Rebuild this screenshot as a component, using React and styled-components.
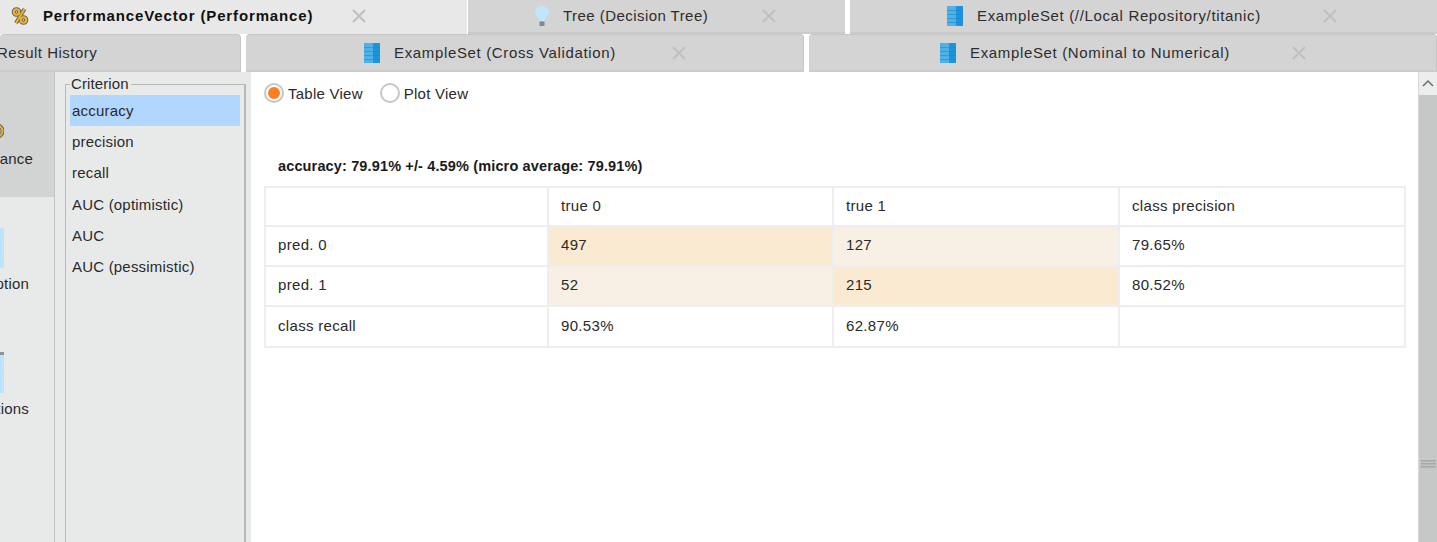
import React from 'react';
import styled, { createGlobalStyle } from 'styled-components';

const GlobalStyle = createGlobalStyle`
  html, body {
    margin: 0;
    padding: 0;
    background: #fff;
    overflow: hidden;
  }
  * {
    box-sizing: border-box;
  }
`;

const Page = styled.div`
  width: 1437px;
  height: 542px;
  display: flex;
  flex-direction: column;
  overflow: hidden;
  font-family: "Liberation Sans", Arial, sans-serif;
  font-size: 15px;
  color: #2a2a2a;
`;

const TabRow = styled.div`
  display: flex;
  height: ${(p) => p.$height}px;
  gap: ${(p) => p.$gap}px;
  flex: none;
`;

const Tab = styled.div`
  width: ${(p) => p.$width}px;
  margin-left: ${(p) => p.$offset || 0}px;
  flex: none;
  display: flex;
  align-items: center;
  overflow: hidden;
  padding-left: ${(p) => p.$pad}px;
  background: ${(p) => (p.$active ? '#e8e8e8' : '#d4d4d4')};
  border-bottom: 2px solid ${(p) => (p.$active ? '#e8e8e8' : '#cbcbcb')};
  border-radius: ${(p) => (p.$round ? '4px 4px 0 0' : '0')};
  border-top: ${(p) => (p.$round ? '1px solid #c6c6c6' : 'none')};
  border-right: ${(p) => (p.$round ? '1px solid #c6c6c6' : 'none')};
`;

const TabIcon = styled.svg`
  width: 18px;
  height: 20px;
  flex: none;
  margin-right: ${(p) => p.$gap}px;
`;

const TabLabel = styled.span`
  white-space: nowrap;
  margin-left: ${(p) => p.$shift || 0}px;
  margin-bottom: ${(p) => p.$lift || 0}px;
  letter-spacing: ${(p) => p.$spacing}px;
  font-weight: ${(p) => (p.$active ? 700 : 400)};
  color: ${(p) => (p.$active ? '#111' : '#2d2d2d')};
`;

const Close = styled.svg`
  width: 14px;
  height: 14px;
  flex: none;
  margin-left: ${(p) => p.$gap}px;
`;

const Body = styled.div`
  flex: 1;
  display: flex;
  min-height: 0;
`;

const Sidebar = styled.div`
  width: 55px;
  flex: none;
  background: #e8eaea;
  border-right: 1px solid #c4c4c4;
  display: flex;
  flex-direction: column;
`;

const SideItem = styled.div`
  height: 125px;
  flex: none;
  display: flex;
  flex-direction: column;
  justify-content: flex-end;
  padding-bottom: 30px;
  background: ${(p) => (p.$active ? '#d2d3d3' : 'transparent')};
  overflow: hidden;
`;

const SideIcon = styled.svg`
  flex: none;
  align-self: flex-start;
  width: 14px;
  height: ${(p) => p.$height}px;
  margin-left: -10px;
  margin-bottom: ${(p) => p.$gap}px;
`;

const SideLabel = styled.div`
  align-self: flex-end;
  margin-right: ${(p) => p.$right}px;
  white-space: nowrap;
  letter-spacing: 0.2px;
  line-height: 16px;
`;

const CriterionPane = styled.div`
  width: 196px;
  flex: none;
  background: #e8eaea;
  padding: 4px 5px 0 10px;
  display: flex;
`;

const Fieldset = styled.fieldset`
  flex: 1;
  margin: 0;
  padding: 0 4px 0 4px;
  border: 1px solid #b9b9b9;
  border-right-width: 2px;
  border-bottom: none;
  min-width: 0;
`;

const Legend = styled.legend`
  padding: 0 2px 0 1px;
  line-height: 16px;
  letter-spacing: 0.1px;
  margin-bottom: 3px;
`;

const CriterionItem = styled.div`
  height: 31.2px;
  line-height: 31px;
  padding-left: 2px;
  letter-spacing: 0.2px;
  background: ${(p) => (p.$selected ? '#b2d7ff' : 'transparent')};
`;

const Main = styled.div`
  flex: 1;
  min-width: 0;
  background: #fff;
  padding: 10px 13px 0 13px;
  display: flex;
  flex-direction: column;
`;

const ViewToggle = styled.div`
  display: flex;
  align-items: center;
  height: 22px;
`;

const RadioOption = styled.label`
  display: flex;
  align-items: center;
  gap: 4px;
  margin-right: 17px;
  letter-spacing: 0.25px;
`;

const RadioMark = styled.span`
  width: 20px;
  height: 20px;
  border-radius: 50%;
  border: 2px solid #c6c6c6;
  background: #fff;
  display: flex;
  align-items: center;
  justify-content: center;

  &::after {
    content: '';
    display: ${(p) => (p.$on ? 'block' : 'none')};
    width: 12px;
    height: 12px;
    border-radius: 50%;
    background: #fd7e1f;
  }
`;

const Summary = styled.div`
  margin: 54px 0 0 14px;
  font-size: 14.5px;
  font-weight: 700;
  letter-spacing: 0.14px;
  height: 17px;
  line-height: 17px;
  color: #1a1a1a;
`;

const Matrix = styled.table`
  margin-top: 11px;
  width: 1140px;
  border-collapse: collapse;
  table-layout: fixed;
`;

const Column = styled.col`
  width: ${(p) => p.$width}px;
`;

const Cell = styled.td`
  height: ${(p) => p.$height}px;
  padding: 0 0 3px 12px;
  border: 2px solid #eeeeee;
  background: ${(p) => p.$fill || '#fff'};
  letter-spacing: 0.32px;
`;

const Scrollbar = styled.div`
  width: 19px;
  flex: none;
  background: #c6c7c7;
  border-left: 1px solid #d8d8d8;
  display: flex;
  flex-direction: column;
  align-items: center;
`;

const ScrollButton = styled.div`
  width: 100%;
  height: 23px;
  flex: none;
  background: #eceeee;
  display: flex;
  align-items: center;
  justify-content: center;
`;

const Grip = styled.div`
  margin-top: 365px;
  width: 15px;
  height: 9px;
  background: repeating-linear-gradient(to bottom, #a6a7a7 0 1px, #b4b5b5 1px 2px, #c2c3c3 2px 3px);
`;

function SetIcon() {
  return (
    <TabIcon viewBox="0 0 18 20" $gap={14}>
      <rect x="2" y="0" width="16" height="20" fill="#1e93da" />
      <rect x="2" y="0" width="9" height="20" fill="#4db2ea" />
      <path d="M2 4.500h16M2 8.500h16M2 12.500h16M2 16.500h16" stroke="#1a83c6" strokeOpacity="0.5" strokeWidth="1" />
    </TabIcon>
  );
}

function CloseIcon({ gap }) {
  return (
    <Close viewBox="0 0 14 14" $gap={gap}>
      <path d="M1 1 13 13M13 1 1 13" stroke="#c0c0c0" strokeWidth="2" />
    </Close>
  );
}

function PercentIcon() {
  return (
    <TabIcon viewBox="0 0 18 20" $gap={14}>
      <g fill="none" stroke="#5f6468" strokeWidth="4">
        <path d="M13.500 3 5 17" />
        <circle cx="5.500" cy="6" r="2.800" />
        <circle cx="12.500" cy="14" r="2.800" />
      </g>
      <g fill="none" stroke="#f0b429" strokeWidth="2">
        <path d="M13.500 3 5 17" />
        <circle cx="5.500" cy="6" r="2.800" />
        <circle cx="12.500" cy="14" r="2.800" />
      </g>
    </TabIcon>
  );
}

function BulbIcon() {
  return (
    <TabIcon viewBox="0 0 18 20" $gap={11}>
      <path d="M8 0C3.800 0 1 3 1 6.500 1 9.800 4.800 11.500 5.500 15h5C11.200 11.500 15 9.800 15 6.500 15 3 12.200 0 8 0Z" fill="#bfe6fc" />
      <path d="M5.500 15.500h5V20h-5z" fill="#7f8a90" />
    </TabIcon>
  );
}

const criteria = ['accuracy', 'precision', 'recall', 'AUC (optimistic)', 'AUC', 'AUC (pessimistic)'];

const columns = [283, 285, 286, 286];

const rowHeights = [39, 40, 40, 41];

const rows = [
  [{ text: '' }, { text: 'true 0' }, { text: 'true 1' }, { text: 'class precision' }],
  [{ text: 'pred. 0' }, { text: '497', fill: '#fbead2' }, { text: '127', fill: '#f8f0e4' }, { text: '79.65%' }],
  [{ text: 'pred. 1' }, { text: '52', fill: '#f8f0e4' }, { text: '215', fill: '#fbead2' }, { text: '80.52%' }],
  [{ text: 'class recall' }, { text: '90.53%' }, { text: '62.87%' }, { text: '' }],
];

export default function App() {
  return (
    <Page>
      <GlobalStyle />
      <TabRow $height={34} $gap={0}>
        <Tab $active $width={467} $pad={11}>
          <PercentIcon />
          <TabLabel $active $spacing={0.87} $lift={2}>PerformanceVector (Performance)</TabLabel>
          <CloseIcon gap={39} />
        </Tab>
        <Tab $width={377} $offset={1} $pad={66}>
          <BulbIcon />
          <TabLabel $spacing={0.45} $lift={2}>Tree (Decision Tree)</TabLabel>
          <CloseIcon gap={54} />
        </Tab>
        <Tab $width={588} $offset={5} $pad={95}>
          <SetIcon />
          <TabLabel $spacing={0.65} $lift={2}>ExampleSet (//Local Repository/titanic)</TabLabel>
          <CloseIcon gap={62} />
        </Tab>
      </TabRow>
      <TabRow $height={38} $gap={5}>
        <Tab $round $width={241} $pad={0}>
          <TabLabel $spacing={0.5} $shift={-3}>Result History</TabLabel>
        </Tab>
        <Tab $round $width={558} $pad={116}>
          <SetIcon />
          <TabLabel $spacing={0.65}>ExampleSet (Cross Validation)</TabLabel>
          <CloseIcon gap={56} />
        </Tab>
        <Tab $round $width={628} $pad={129}>
          <SetIcon />
          <TabLabel $spacing={0.65}>ExampleSet (Nominal to Numerical)</TabLabel>
          <CloseIcon gap={62} />
        </Tab>
      </TabRow>
      <Body>
        <Sidebar>
          <SideItem $active>
            <SideIcon viewBox="0 0 14 18" $height={18} $gap={11}>
              <circle cx="7" cy="9" r="5.500" fill="none" stroke="#5f6468" strokeWidth="4" />
              <circle cx="7" cy="9" r="5.500" fill="none" stroke="#f0b429" strokeWidth="2" />
            </SideIcon>
            <SideLabel $right={21}>Performance</SideLabel>
          </SideItem>
          <SideItem>
            <SideIcon viewBox="0 0 14 40" $height={40} $gap={8}>
              <rect width="14" height="40" fill="#b9e3fb" />
              <path d="M12.500 0v40" stroke="#d6eefc" strokeDasharray="1 2" />
            </SideIcon>
            <SideLabel $right={25}>Description</SideLabel>
          </SideItem>
          <SideItem>
            <SideIcon viewBox="0 0 14 41" $height={41} $gap={8}>
              <rect y="3" width="14" height="38" fill="#b9e3fb" />
              <rect width="14" height="3" fill="#8b9499" />
              <path d="M12.500 3v38" stroke="#d6eefc" strokeDasharray="1 2" />
            </SideIcon>
            <SideLabel $right={25}>Annotations</SideLabel>
          </SideItem>
        </Sidebar>
        <CriterionPane>
          <Fieldset>
            <Legend>Criterion</Legend>
            {criteria.map((name, i) => (
              <CriterionItem key={name} $selected={i === 0}>{name}</CriterionItem>
            ))}
          </Fieldset>
        </CriterionPane>
        <Main>
          <ViewToggle>
            <RadioOption><RadioMark $on />Table View</RadioOption>
            <RadioOption><RadioMark />Plot View</RadioOption>
          </ViewToggle>
          <Summary>accuracy: 79.91% +/- 4.59% (micro average: 79.91%)</Summary>
          <Matrix>
            <colgroup>
              {columns.map((w, i) => (
                <Column key={i} $width={w} />
              ))}
            </colgroup>
            <tbody>
              {rows.map((row, r) => (
                <tr key={r}>
                  {row.map((cell, c) => (
                    <Cell key={c} $height={rowHeights[r]} $fill={cell.fill}>{cell.text}</Cell>
                  ))}
                </tr>
              ))}
            </tbody>
          </Matrix>
        </Main>
        <Scrollbar>
          <ScrollButton>
            <svg width="14" height="9" viewBox="0 0 14 9">
              <path d="M2 7 7 2l5 5" fill="none" stroke="#6d6d6d" strokeWidth="1.500" />
            </svg>
          </ScrollButton>
          <Grip />
        </Scrollbar>
      </Body>
    </Page>
  );
}
